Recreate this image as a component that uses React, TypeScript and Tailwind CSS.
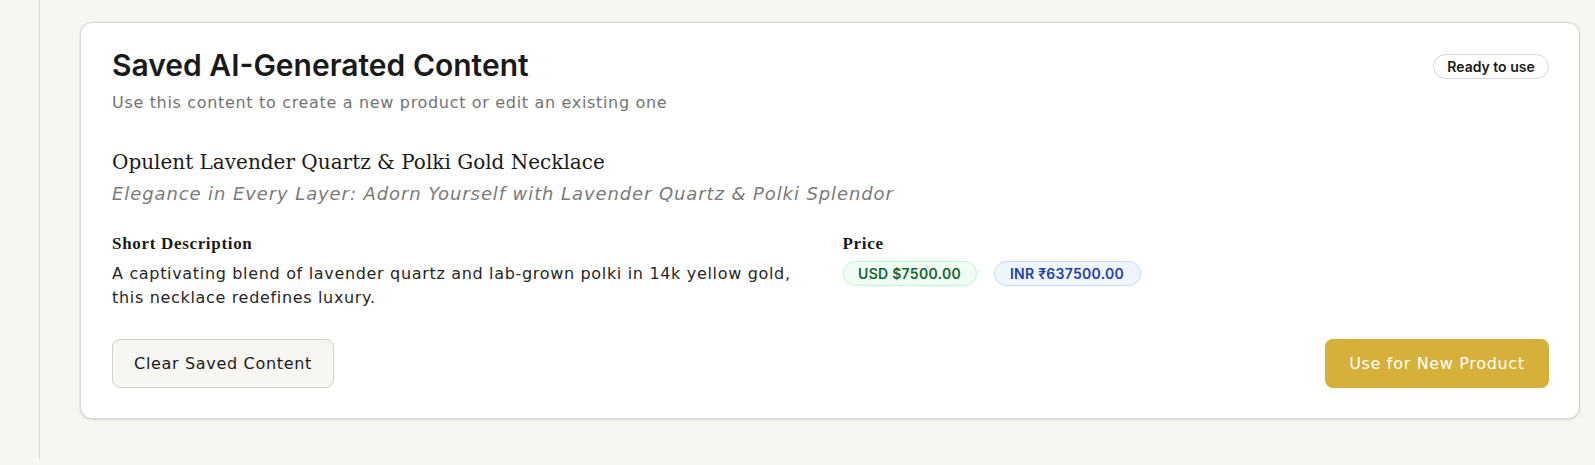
const heading = "font-['Inter','Open_Sans',sans-serif]";
const body = "font-['DejaVu_Sans','Inter',sans-serif] tracking-[0.042em]";
const serif = "font-['DejaVu_Serif','Liberation_Serif',serif]";
const label = "font-['Liberation_Serif','DejaVu_Serif',serif] text-[17px] leading-6 font-bold tracking-[0.04em] text-[#1a1a1a]";

export default function App() {
  return (
    <div className={`flex h-[465px] bg-[#f7f6f2] ${heading}`}>
      <div className="w-[40px] h-[459px] shrink-0 border-r border-[#d9d9d6]" />
      <div className="flex-1 pl-[40px] pr-[15px] pt-[22px]">
        <div className="rounded-xl border border-[#d6d6d3] bg-white shadow-sm pl-[31px] pr-[30px] pt-[24px] pb-[30px]">
          <div className="flex items-start justify-between">
            <div>
              <h2 className="text-[30px] leading-9 font-semibold text-[#1a1a1a]">Saved AI-Generated Content</h2>
              <p className={`${body} mt-[8px] text-base leading-6 text-[#737373]`}>
                Use this content to create a new product or edit an existing one
              </p>
            </div>
            <span className="mt-[7px] w-[116px] h-[25px] flex items-center justify-center rounded-full border border-[#d4d4d4] text-sm font-semibold text-[#1a1a1a]">
              Ready to use
            </span>
          </div>

          <div className="mt-[33px]">
            <h3 className={`${serif} text-[20px] leading-7 text-[#1a1a1a]`}>
              Opulent Lavender Quartz &amp; Polki Gold Necklace
            </h3>
            <p className="font-['DejaVu_Sans','Inter',sans-serif] mt-1 text-lg leading-7 italic tracking-[0.05em] text-[#7a7a7a]">
              Elegance in Every Layer: Adorn Yourself with Lavender Quartz &amp; Polki Splendor
            </p>
          </div>

          <div className="mt-6 grid grid-cols-2 gap-6">
            <div>
              <h4 className={label}>Short Description</h4>
              <p className={`${body} mt-[6px] text-base leading-6 text-[#262626]`}>
                A captivating blend of lavender quartz and lab-grown polki in 14k yellow gold, this necklace redefines luxury.
              </p>
            </div>
            <div>
              <h4 className={label}>Price</h4>
              <div className="mt-[5px] flex gap-[17px]">
                <span className="w-[134px] h-[25px] flex items-center justify-center rounded-full border border-[#bbf7d0] bg-[#f0fdf4] text-sm font-semibold tracking-[0.02em] text-[#166534]">
                  USD $7500.00
                </span>
                <span className="w-[147px] h-[25px] flex items-center justify-center rounded-full border border-[#bfdbfe] bg-[#eff6ff] text-sm font-semibold tracking-[0.02em] text-[#1e40af]">
                  INR ₹637500.00
                </span>
              </div>
            </div>
          </div>

          <div className="mt-[29px] flex items-center justify-between">
            <button className={`${body} w-[222px] h-[49px] rounded-lg border border-[#d1d1d1] bg-[#f7f6f2] text-base text-[#1a1a1a]`}>
              Clear Saved Content
            </button>
            <button className={`${body} w-[224px] h-[49px] rounded-lg bg-[#d5b03a] text-base text-white`}>
              Use for New Product
            </button>
          </div>
        </div>
      </div>
    </div>
  );
}
